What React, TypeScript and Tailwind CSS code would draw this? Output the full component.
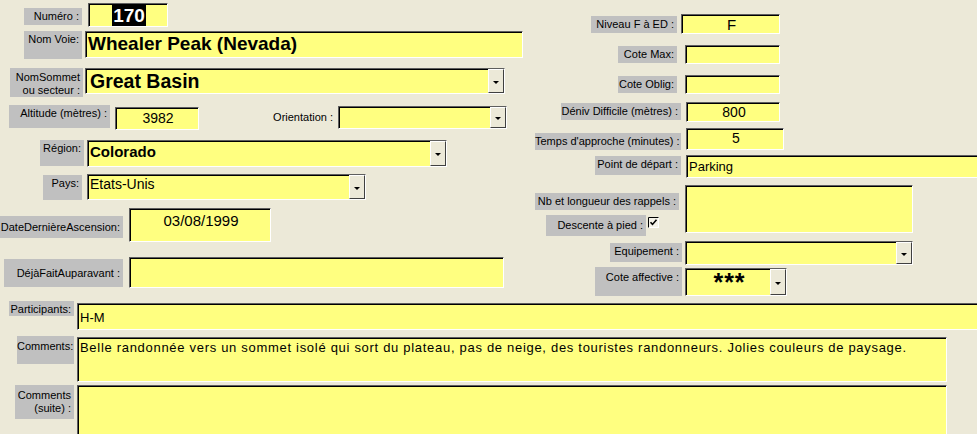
import type { ReactNode } from "react";

function Label({ className = "", children }: { className?: string; children: ReactNode }) {
  return (
    <div className={`shrink-0 bg-[#c0c0c0] text-[11px] leading-[13px] text-right pr-[3px] pt-[2px] whitespace-nowrap ${className}`}>
      {children}
    </div>
  );
}

function DropBtn() {
  return (
    <div className="w-[16px] shrink-0 self-stretch bg-[#ece9d8] border border-t-white border-l-white border-r-[#404040] border-b-[#404040] flex items-center justify-center">
      <span className="block w-0 h-0 border-l-[3px] border-r-[3px] border-t-[3px] border-l-transparent border-r-transparent border-t-black mt-[2px]" />
    </div>
  );
}

function Box({
  className = "",
  inner = "",
  combo = false,
  children,
}: {
  className?: string;
  inner?: string;
  combo?: boolean;
  children?: ReactNode;
}) {
  return (
    <div
      className={`flex shrink-0 bg-[#ffff80] border border-t-[#5e5e5e] border-l-[#5e5e5e] border-r-white border-b-white shadow-[inset_1px_1px_0_#000] ${className}`}
    >
      <div className={`flex-1 min-w-0 overflow-hidden whitespace-nowrap pl-[2px] ${inner}`}>{children}</div>
      {combo && <DropBtn />}
    </div>
  );
}

function Check() {
  return (
    <svg width="11" height="11" viewBox="0 0 11 11" className="shrink-0">
      <rect x="0.5" y="0.5" width="10" height="10" fill="#f4f2e8" stroke="#fff" />
      <path d="M0.5 10.5V0.5H10.5" fill="none" stroke="#000" />
      <path d="M2.5 5.2l2 2.2 4-4.6" fill="none" stroke="#000" strokeWidth="1.6" />
    </svg>
  );
}

export default function App() {
  return (
    <div className="w-[977px] h-[434px] overflow-hidden bg-[#ece9d8] text-black font-['Liberation_Sans',Arial,sans-serif]">
      <div className="flex h-[300px]">
        {/* left column */}
        <div className="w-[525px] shrink-0 flex flex-col pt-[3px]">
          <div className="flex items-start h-[28px]">
            <Label className="ml-[24px] mt-[5px] w-[58px] h-[17px]">Numéro :</Label>
            <Box className="ml-[6px] w-[80px] h-[24px]" inner="text-center text-[19px] font-bold leading-[21px] pt-[1px]">
              <span className="bg-black text-white px-[1px]">170</span>
            </Box>
          </div>
          <div className="flex items-start h-[37px]">
            <Label className="ml-[24px] w-[58px] h-[28px]">Nom Voie:</Label>
            <Box className="ml-[3px] w-[438px] h-[27px]" inner="text-[19px] font-bold leading-[22px] pt-[1px]">
              Whealer Peak (Nevada)
            </Box>
          </div>
          <div className="flex items-start h-[37px]">
            <Label className="ml-[10px] w-[73px] h-[29px] pt-[3px]">
              NomSommet
              <br />
              ou secteur :
            </Label>
            <Box combo className="ml-[2px] w-[420px] h-[26px]" inner="text-[19.5px] font-bold leading-[22px] pt-[1px] pl-[4px]">
              Great Basin
            </Box>
          </div>
          <div className="flex items-start h-[35px]">
            <Label className="ml-[9px] w-[101px] h-[23px]">Altitude (mètres) :</Label>
            <Box className="ml-[5px] mt-[2px] w-[84px] h-[23px]" inner="text-center text-[14px] leading-[16px] pt-[2px]">
              3982
            </Box>
            <div className="ml-[56px] mt-[6px] w-[80px] text-right text-[11px] leading-[13px] pr-[2px]">Orientation :</div>
            <Box combo className="ml-[3px] mt-[1px] w-[169px] h-[23px]" />
          </div>
          <div className="flex items-start h-[34px]">
            <Label className="ml-[40px] w-[44px] h-[26px]">Région:</Label>
            <Box combo className="ml-[3px] w-[360px] h-[27px]" inner="text-[15px] font-bold leading-[17px] pt-[2px]">
              Colorado
            </Box>
          </div>
          <div className="flex items-start h-[34px]">
            <Label className="ml-[43px] mt-[1px] w-[39px] h-[25px]">Pays:</Label>
            <Box combo className="ml-[5px] w-[279px] h-[26px]" inner="text-[14px] leading-[16px] pt-[1px]">
              Etats-Unis
            </Box>
          </div>
          <div className="flex items-start h-[49px]">
            <Label className="mt-[8px] w-[123px] h-[22px] pt-[5px]">DateDernièreAscension:</Label>
            <Box className="ml-[6px] w-[142px] h-[34px]" inner="text-center text-[15px] leading-[17px] pt-[3px]">
              03/08/1999
            </Box>
          </div>
          <div className="flex items-start h-[31px]">
            <Label className="ml-[4px] mt-[2px] w-[119px] h-[28px] pt-[8px]">DéjàFaitAuparavant :</Label>
            <Box className="ml-[6px] w-[375px] h-[31px]" />
          </div>
        </div>

        {/* right column */}
        <div className="flex-1 flex flex-col pt-[14px]">
          <div className="flex items-start h-[31px]">
            <Label className="ml-[66px] mt-[2px] w-[86px] h-[17px]">Niveau F à ED :</Label>
            <Box className="ml-[4px] w-[99px] h-[20px]" inner="text-center text-[15px] leading-[17px] pt-[1px]">
              F
            </Box>
          </div>
          <div className="flex items-start h-[30px]">
            <Label className="ml-[93px] mt-[1px] w-[59px] h-[17px]">Cote Max:</Label>
            <Box className="ml-[8px] w-[95px] h-[19px]" />
          </div>
          <div className="flex items-start h-[27px]">
            <Label className="ml-[93px] mt-[1px] w-[59px] h-[17px]">Cote Oblig:</Label>
            <Box className="ml-[8px] w-[95px] h-[19px]" />
          </div>
          <div className="flex items-start h-[26px]">
            <Label className="ml-[36px] mt-[1px] w-[120px] h-[17px]">Déniv Difficile (mètres) :</Label>
            <Box className="ml-[5px] w-[94px] h-[20px]" inner="text-center text-[14px] leading-[16px] pt-[1px]">
              800
            </Box>
          </div>
          <div className="flex items-start h-[27px]">
            <Label className="ml-[10px] mt-[5px] w-[146px] h-[17px]">Temps d'approche (minutes) :</Label>
            <Box className="ml-[5px] w-[98px] h-[22px]" inner="text-center text-[14px] leading-[16px] pt-[1px]">
              5
            </Box>
          </div>
          <div className="flex items-start h-[30px]">
            <Label className="ml-[70px] mt-[1px] w-[86px] h-[19px]">Point de départ :</Label>
            <Box className="ml-[5px] w-[300px] h-[23px]" inner="text-[13px] leading-[15px] pt-[3px]">
              Parking
            </Box>
          </div>
          <div className="flex items-start h-[56px]">
            <div className="ml-[10px] w-[146px] shrink-0 flex flex-col">
              <Label className="mt-[8px] w-[144px] h-[17px]">Nb et longueur des rappels :</Label>
              <div className="flex items-start mt-[5px]">
                <Label className="ml-[11px] w-[100px] h-[21px] pt-[4px]">Descente à pied :</Label>
                <div className="ml-[2px] mt-[2px]">
                  <Check />
                </div>
              </div>
            </div>
            <Box className="ml-[4px] w-[228px] h-[48px]" />
          </div>
          <div className="flex items-start h-[26px]">
            <Label className="ml-[85px] mt-[2px] w-[72px] h-[19px]">Equipement :</Label>
            <Box combo className="ml-[3px] w-[228px] h-[24px]" />
          </div>
          <div className="flex items-start">
            <Label className="ml-[70px] w-[87px] h-[29px] pt-[4px]">Cote affective :</Label>
            <Box combo className="ml-[3px] mt-[1px] w-[102px] h-[28px]" inner="text-center text-[25px] font-bold leading-[22px] pt-[2px] pl-[3px] tracking-[1px]">
              ***
            </Box>
          </div>
        </div>
      </div>

      {/* bottom rows */}
      <div className="flex flex-col pt-[1px]">
        <div className="flex items-start h-[35px]">
          <Label className="ml-[9px] w-[65px] h-[15px] text-[10px] leading-[12px] pt-[1px]">Participants:</Label>
          <Box className="ml-[3px] mt-[2px] w-[910px] h-[27px]" inner="text-[13px] leading-[15px] pt-[6px]">
            H-M
          </Box>
        </div>
        <div className="flex items-start h-[49px]">
          <Label className="ml-[17px] w-[57px] h-[28px] text-[10px] leading-[12px] pt-[4px]">Comments:</Label>
          <Box className="ml-[3px] mt-[1px] w-[870px] h-[45px]" inner="text-[13px] leading-[15px] pt-[2px] tracking-[0.7px]">
            Belle randonnée vers un sommet isolé qui sort du plateau, pas de neige, des touristes randonneurs. Jolies couleurs de paysage.
          </Box>
        </div>
        <div className="flex items-start">
          <Label className="ml-[15px] w-[59px] h-[34px] text-[10px] leading-[12px] pt-[4px]">
            Comments
            <br />
            (suite) :
          </Label>
          <Box className="ml-[3px] w-[870px] h-[55px]" />
        </div>
      </div>
    </div>
  );
}
